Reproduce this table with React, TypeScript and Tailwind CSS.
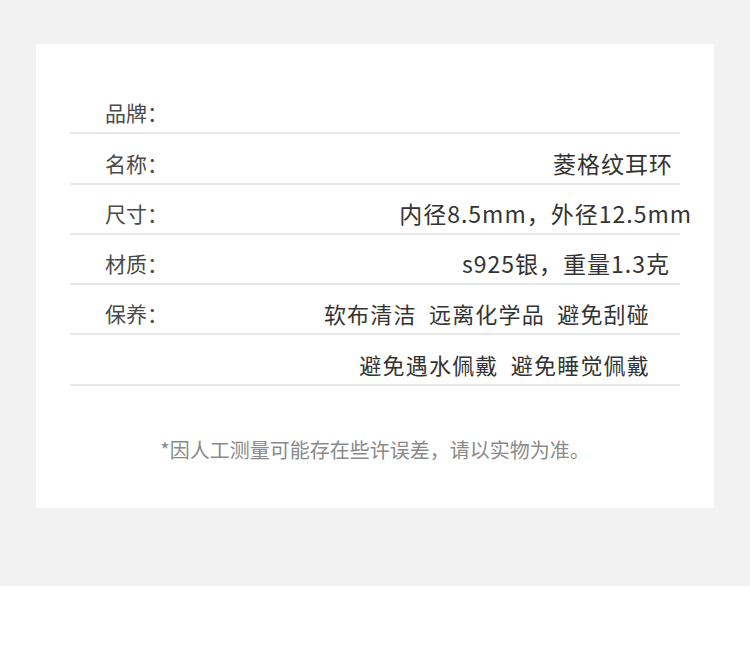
const rows: { label: string; value: string; cls: string; h: string }[] = [
  { label: "品牌：", value: "", cls: "", h: "h-[50px]" },
  { label: "名称：", value: "菱格纹耳环", cls: "mr-[7px] text-[23px] tracking-[1px]", h: "h-[51px]" },
  { label: "尺寸：", value: "内径8.5mm，外径12.5mm", cls: "-mr-[12px] text-[23px] tracking-[1px]", h: "h-[50px]" },
  { label: "材质：", value: "s925银，重量1.3克", cls: "mr-[10px] text-[23px] tracking-[1px]", h: "h-[50px]" },
  { label: "保养：", value: "软布清洁  远离化学品  避免刮碰", cls: "mr-[30px] text-[22px] tracking-[1.2px]", h: "h-[50px]" },
  { label: "", value: "避免遇水佩戴  避免睡觉佩戴", cls: "mr-[30px] text-[22px] tracking-[1.2px]", h: "h-[51px]" },
];

export default function App() {
  return (
    <div
      className="w-[750px] h-[672px] bg-white"
      style={{ fontFamily: '"Noto Sans CJK SC", "Noto Sans", sans-serif' }}
    >
      <div className="h-[586px] bg-[#f2f2f2] pt-[44px] px-[36px]">
        <div className="h-[464px] bg-white px-[34px] pt-[40px]">
          {rows.map((row, i) => (
            <div
              key={i}
              className={`flex ${row.h} items-end justify-between border-b-2 border-[#e8e8e8] pb-[6px]`}
            >
              <span className="pl-[35px] text-[21px] leading-[28px] text-[#4a4a4a]">{row.label}</span>
              <span className={`whitespace-pre leading-[28px] text-[#333] ${row.cls}`}>{row.value}</span>
            </div>
          ))}
          <p className="mt-[50px] text-center text-[20px] leading-[28px] text-[#8a8a8a]">
            *因人工测量可能存在些许误差，请以实物为准。
          </p>
        </div>
      </div>
    </div>
  );
}
